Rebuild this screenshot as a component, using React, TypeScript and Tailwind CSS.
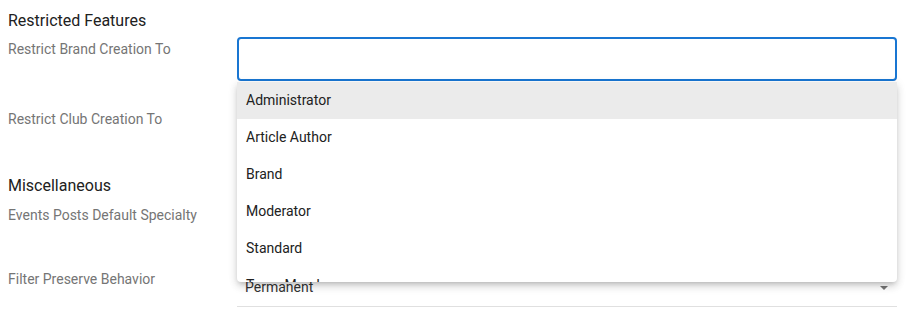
import React from "react";

const items = ["Administrator", "Article Author", "Brand", "Moderator", "Standard", "Team Member"];

export default function App() {
  return (
    <div
      className="relative w-[912px] h-[323px] bg-white pl-2 pr-[15px] overflow-hidden"
      style={{ fontFamily: "Roboto, 'Liberation Sans', sans-serif" }}
    >
      <div className="pt-[9px] text-[16px] leading-6 text-[#212121]">Restricted Features</div>

      <div className="flex mt-[4px]">
        <div className="w-[229px] pt-[2px] text-[14px] leading-5 text-[#757575]">Restrict Brand Creation To</div>
        <div className="flex-1 h-[44px] border-2 border-[#1976d2] rounded-[4px]" />
      </div>

      <div className="flex mt-[27px]">
        <div className="w-[229px] pt-[1px] text-[14px] leading-5 text-[#757575]">Restrict Club Creation To</div>
      </div>

      <div className="mt-[45px] text-[16px] leading-6 text-[#212121]">Miscellaneous</div>

      <div className="flex mt-[7px]">
        <div className="w-[229px] text-[14px] leading-5 text-[#757575]">Events Posts Default Specialty</div>
      </div>

      <div className="flex mt-[43px]">
        <div className="w-[229px] pt-[1px] text-[14px] leading-5 text-[#757575]">Filter Preserve Behavior</div>
        <div className="flex-1 flex items-center justify-between pt-[9px] pb-[9px] pl-2 pr-[9px] border-b border-[#e0e0e0]">
          <span className="text-[14px] leading-5 text-[#333]">Permanent</span>
          <svg width="8" height="4" viewBox="0 0 8 4" className="mt-[1px]">
            <path d="M0 0h8L4 4z" fill="#757575" />
          </svg>
        </div>
      </div>

      <div className="absolute left-[237px] top-[82px] w-[660px] h-[200px] bg-white rounded-b-[4px] overflow-hidden shadow-[0_3px_5px_-2px_rgba(0,0,0,0.18),0_5px_8px_0_rgba(0,0,0,0.1),0_2px_10px_1px_rgba(0,0,0,0.08)]">
        {items.map((it, i) => (
          <div
            key={it}
            className={`h-[37px] flex items-center pl-[9px] text-[14px] text-[#212121] ${i === 0 ? "bg-[#ebebeb]" : ""}`}
          >
            {it}
          </div>
        ))}
      </div>
    </div>
  );
}
